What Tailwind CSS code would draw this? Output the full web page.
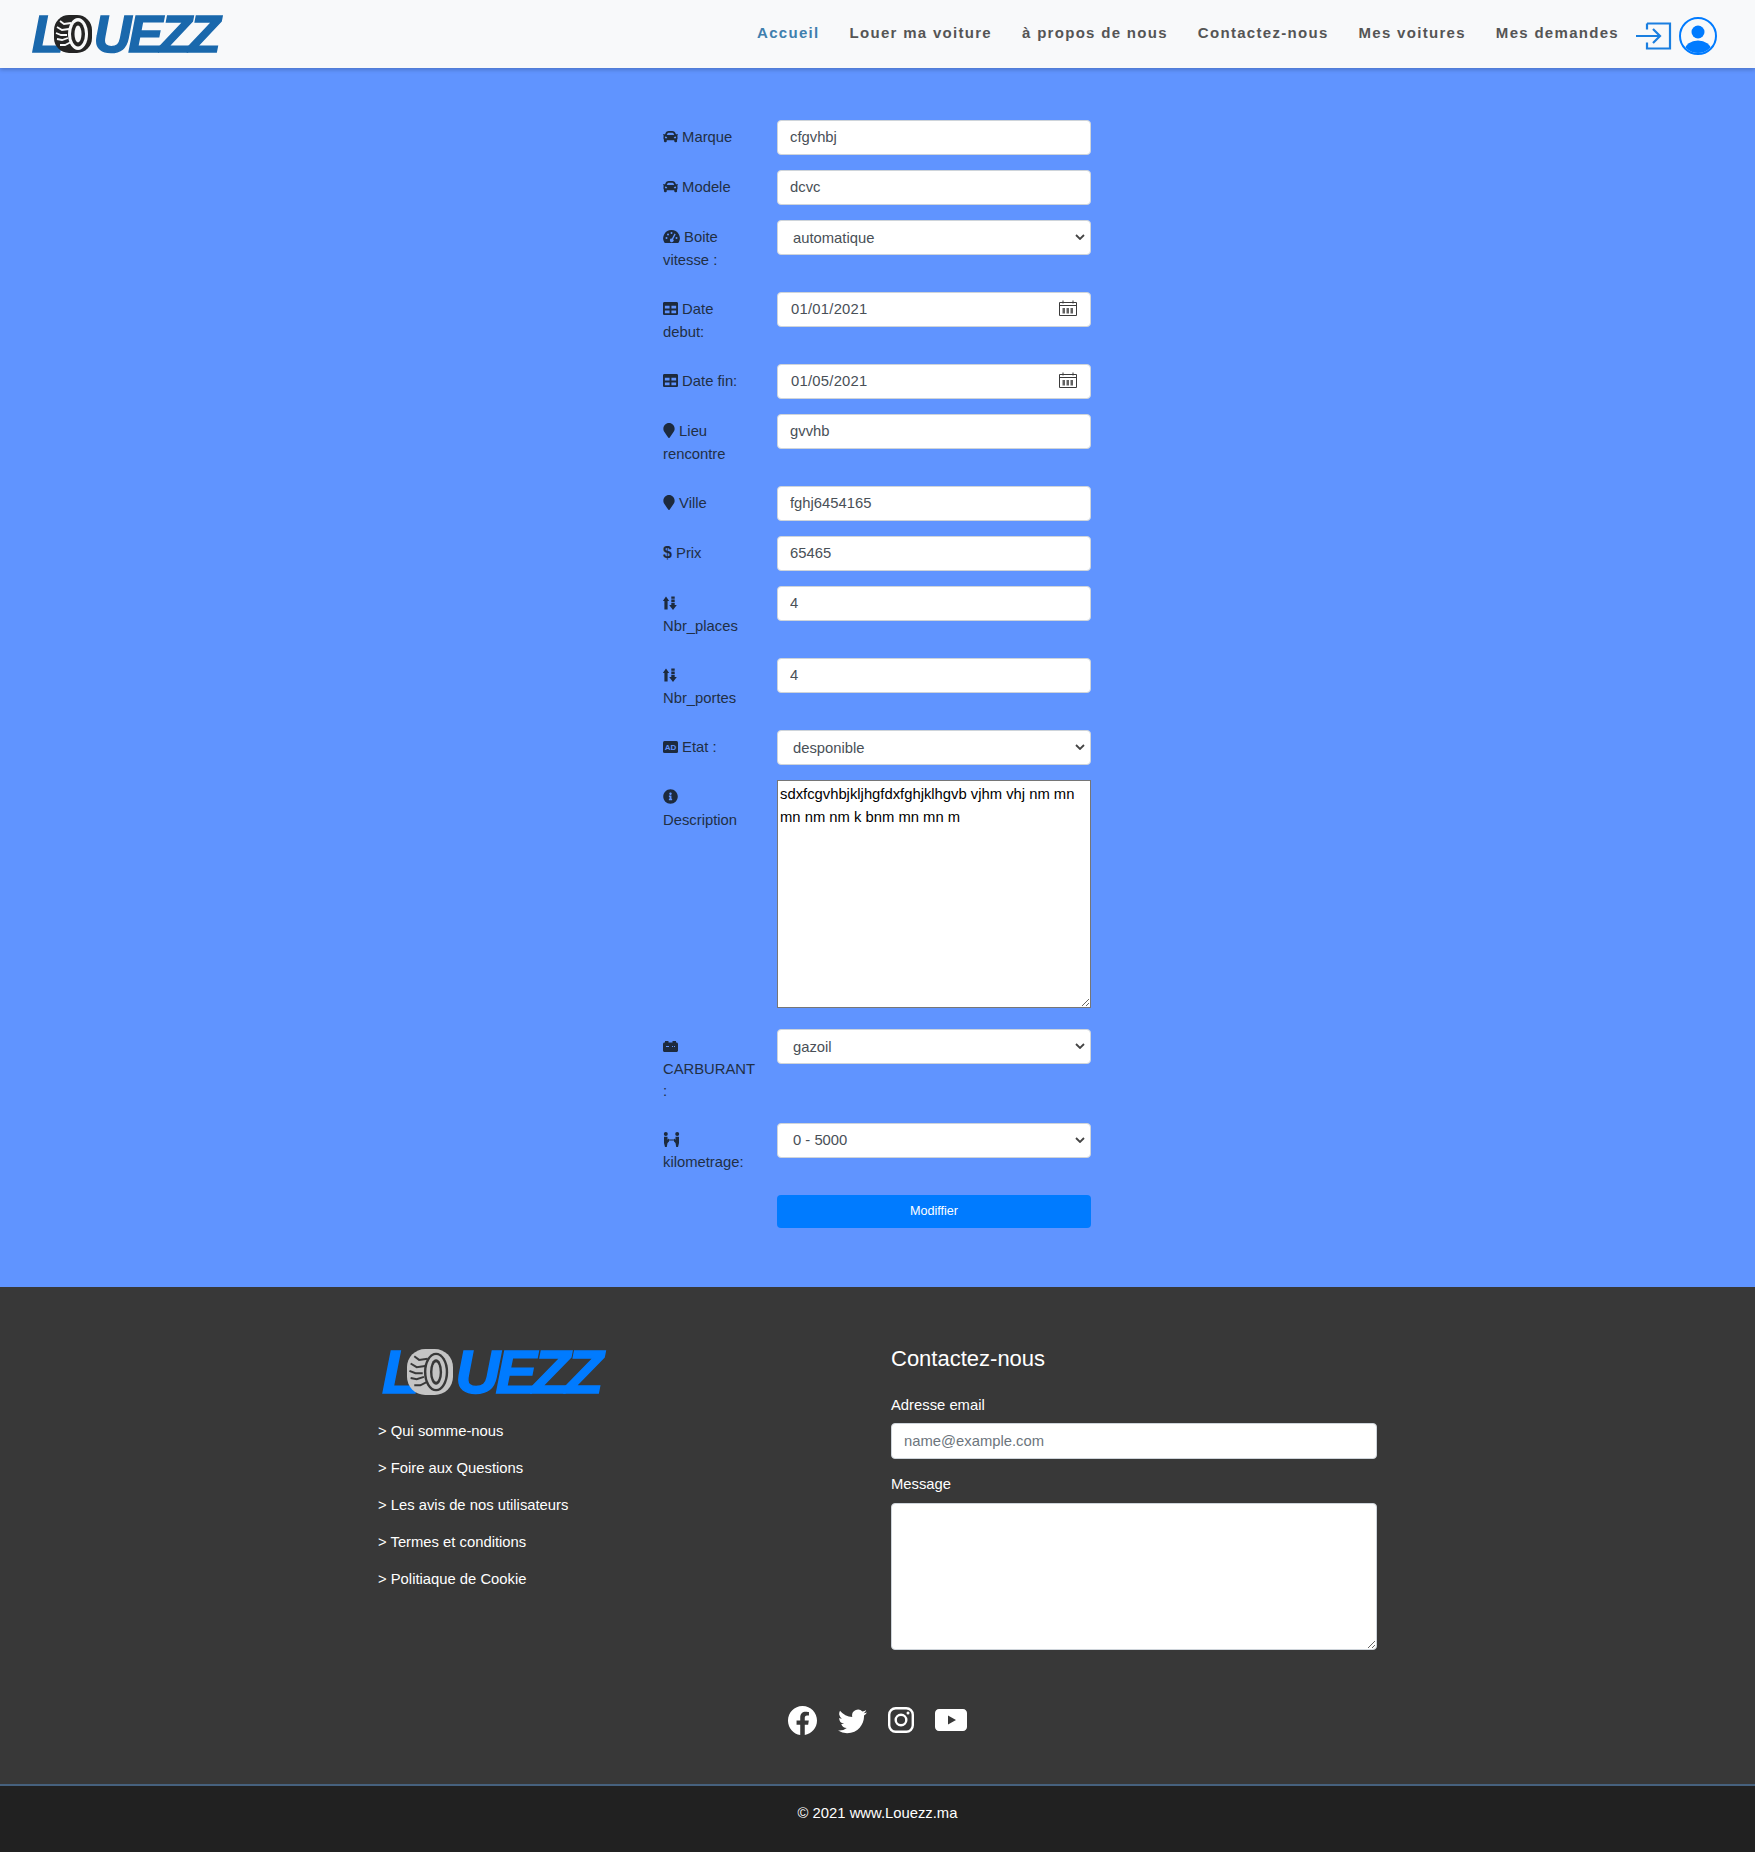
<!DOCTYPE html>
<html lang="fr">

<head>
  <meta charset="UTF-8">
  <meta name="viewport" content="width=device-width, initial-scale=1.0">
  <script src="https://cdn.jsdelivr.net/npm/@tailwindcss/browser@4"></script>
  <title>Louezz - Modifier voiture</title>
</head>

<body class="font-['Liberation_Sans',Arial,sans-serif] text-[14.8px] bg-[#6094ff]">

  <!-- icones reutilisees -->
  <svg class="hidden">
    <symbol id="car" viewBox="0 0 512 512"><path d="M499.99 176h-59.87l-16.64-41.6C406.38 91.63 365.57 64 319.5 64h-127c-46.06 0-86.88 27.63-103.99 70.4L71.87 176H12.01C4.2 176-1.53 183.34.37 190.91l6 24C7.7 220.25 12.5 224 18.01 224h20.07C24.65 235.73 16 252.78 16 272v48c0 16.12 6.16 30.67 16 41.93V416c0 17.67 14.33 32 32 32h32c17.67 0 32-14.33 32-32v-32h256v32c0 17.67 14.33 32 32 32h32c17.67 0 32-14.33 32-32v-54.07c9.84-11.25 16-25.8 16-41.93v-48c0-19.22-8.65-36.27-22.07-48H494c5.51 0 10.31-3.75 11.64-9.09l6-24c1.89-7.57-3.84-14.91-11.65-14.91zm-352.06-17.83c7.29-18.22 24.94-30.17 44.57-30.17h127c19.63 0 37.28 11.95 44.57 30.17L384 208H128l19.93-49.83zM96 319.8c-19.2 0-32-12.76-32-31.9S76.8 256 96 256s48 28.71 48 47.85-28.8 15.95-48 15.95zm320 0c-19.2 0-48 3.19-48-15.95S396.8 256 416 256s32 12.76 32 31.9-12.8 31.9-32 31.9z" fill="currentColor"/></symbol>
    <symbol id="table" viewBox="0 0 512 512"><path d="M464 32H48C21.49 32 0 53.49 0 80v352c0 26.51 21.49 48 48 48h416c26.51 0 48-21.49 48-48V80c0-26.51-21.49-48-48-48zM224 416H64v-96h160v96zm0-160H64v-96h160v96zm224 160H288v-96h160v96zm0-160H288v-96h160v96z" fill="currentColor"/></symbol>
    <symbol id="pin" viewBox="0 0 384 512"><path d="M172.268 501.67C26.97 291.031 0 268.413 0 192 0 85.961 85.961 0 192 0s192 85.961 192 192c0 76.413-26.97 99.031-172.268 309.67-9.535 13.774-29.93 13.773-39.464 0z" fill="currentColor"/></symbol>
    <symbol id="sort" viewBox="0 0 14 14"><path d="M3 .5 L6.200 5 H4.600 V13.500 H1.400 V5 H-.2 Z M8.300 .5 H11.700 V2.800 H8.300 Z M8.300 3.600 H11.700 V5.900 H8.300 Z M8.300 6.700 H11.700 V9 H13.800 L10 14 L6.200 9 H8.300 Z" fill="currentColor"/></symbol>
    <symbol id="calendar" viewBox="0 0 18 16"><path d="M.5 2.500h17v13H.5z M.5 5.500h17 M4 .5v3 M14 .5v3" fill="none" stroke="currentColor"/><path d="M3.500 8v5.500h2.500V8z M7.500 8v5.500h2.500V8z M11.500 8v5.500h2.500V8z" fill="currentColor" opacity=".8"/></symbol>
    <symbol id="chevron" viewBox="0 0 10 6"><path d="M1 1l4 4 4-4" fill="none" stroke="currentColor" stroke-width="1.800"/></symbol>
    <symbol id="tire-dark" viewBox="0 0 38 38">
      <rect x="0" y="0" width="38" height="38" rx="15" fill="#242424"/>
      <path d="M6 6l4 3 7-1M3 12l5 3 7-1M2 18l5 2 6 0M3 24l5 1 6-2M6 30l5 0 6-3" stroke="#f8f9fa" stroke-width="1.800" fill="none"/>
      <ellipse cx="24" cy="19" rx="10" ry="16" fill="#f8f9fa"/>
      <ellipse cx="24" cy="19" rx="7" ry="12.500" fill="#242424"/>
      <ellipse cx="24" cy="19" rx="3.500" ry="8.500" fill="#f8f9fa"/>
    </symbol>
    <symbol id="tire-light" viewBox="0 0 38 38">
      <rect x="0" y="0" width="38" height="38" rx="15" fill="#c4c4c4"/>
      <path d="M6 6l4 3 7-1M3 12l5 3 7-1M2 18l5 2 6 0M3 24l5 1 6-2M6 30l5 0 6-3" stroke="#383838" stroke-width="1.600" fill="none"/>
      <ellipse cx="24" cy="19" rx="10" ry="16" fill="#383838"/>
      <ellipse cx="24" cy="19" rx="8" ry="14" fill="#c4c4c4"/>
      <ellipse cx="24" cy="19" rx="5" ry="10.500" fill="#383838"/>
      <ellipse cx="24" cy="19" rx="3" ry="8" fill="#c4c4c4"/>
    </symbol>
  </svg>

  <header class="h-[68px] bg-[#f8f9fa] flex items-center justify-between pl-[32px] pr-[38px] shadow-[0_2px_4px_rgba(0,0,0,0.2)] relative">
    <div class="flex items-center text-[#1a68ac] font-bold italic text-[52px] leading-[38px] tracking-[-3px] [-webkit-text-stroke:1.5px_#1a68ac]">
      <span>L</span>
      <svg class="w-[38px] h-[38px] -ml-[7px] mr-[2px]"><use href="#tire-dark"/></svg>
      <span>UEZZ</span>
    </div>
    <nav class="flex items-center">
      <div class="flex items-center gap-[30px] text-[15px] font-bold tracking-[1.300px] text-[#555] -mt-[2px]">
        <a href="#" class="text-[#3f7fae]">Accueil</a>
        <a href="#">Louer ma voiture</a>
        <a href="#">à propos de nous</a>
        <a href="#">Contactez-nous</a>
        <a href="#">Mes voitures</a>
        <a href="#">Mes demandes</a>
      </div>
      <svg class="w-[36px] h-[28px] ml-[17px] mt-[3px] text-[#1a7fe0]" viewBox="0 0 36 28" fill="none" stroke="currentColor" stroke-width="2.200">
        <path d="M11 1.500h23v25H11v-6 M11 1.500v6"/>
        <path d="M0 14h24 M17 7l7 7-7 7"/>
      </svg>
      <svg class="w-[38px] h-[38px] ml-[7px] mt-[3px] text-[#007bff]" viewBox="0 0 38 38">
        <defs><clipPath id="ucirc"><circle cx="19" cy="19" r="17"/></clipPath></defs>
        <circle cx="19" cy="19" r="18" fill="none" stroke="currentColor" stroke-width="2"/>
        <g clip-path="url(#ucirc)" fill="currentColor">
          <circle cx="19" cy="15" r="6.500"/>
          <ellipse cx="19" cy="33" rx="13" ry="9.500"/>
        </g>
      </svg>
    </nav>
  </header>

  <main class="h-[1219px] pt-[52px] pl-[663px]">
    <form class="text-[#212f45] leading-[22.5px]">

      <div class="flex mb-[15px]">
        <label class="w-[114px] py-[6px]"><svg class="inline-block w-[15px] h-[15px] align-[-2px] text-[#1d2a3d]"><use href="#car"/></svg> Marque</label>
        <input value="cfgvhbj" class="w-[314px] h-[35px] px-[12px] pb-[1px] bg-white border border-[#ced4da] rounded-[4px] text-[#495057]">
      </div>

      <div class="flex mb-[15px]">
        <label class="w-[114px] py-[6px]"><svg class="inline-block w-[15px] h-[15px] align-[-2px] text-[#1d2a3d]"><use href="#car"/></svg> Modele</label>
        <input value="dcvc" class="w-[314px] h-[35px] px-[12px] pb-[1px] bg-white border border-[#ced4da] rounded-[4px] text-[#495057]">
      </div>

      <div class="flex items-start mb-[15px]">
        <label class="w-[114px] py-[6px]">
          <svg class="inline-block w-[17px] h-[15px] align-[-2px] text-[#1d2a3d]" viewBox="0 0 17 15"><path fill-rule="evenodd" d="M8.500 1a8.300 8.300 0 0 0-7.200 12.500c.2.300.5.500.9.500h12.600c.4 0 .7-.2.900-.5A8.300 8.300 0 0 0 8.500 1zM11.500 4.600l1.200.6-2.600 5a1.800 1.800 0 1 1-1.200-.6zM3.500 8a1 1 0 1 1 0 2 1 1 0 0 1 0-2zM5 4.500a1 1 0 1 1 0 2 1 1 0 0 1 0-2zM8.500 3a1 1 0 1 1 0 2 1 1 0 0 1 0-2zM13.500 8a1 1 0 1 1 0 2 1 1 0 0 1 0-2z" fill="currentColor"/></svg> Boite<br>vitesse :
        </label>
        <div class="relative">
          <select class="block appearance-none w-[314px] h-[35px] pl-[15px] pr-[24px] pt-[1px] bg-white border border-[#ced4da] rounded-[4px] text-[#495057]">
            <option>automatique</option>
          </select>
          <svg class="absolute right-[6px] top-[14px] w-[10px] h-[6px] text-[#444]"><use href="#chevron"/></svg>
        </div>
      </div>

      <div class="flex items-start mb-[15px]">
        <label class="w-[114px] py-[6px]"><svg class="inline-block w-[15px] h-[15px] align-[-2px] text-[#1d2a3d]"><use href="#table"/></svg> Date<br>debut:</label>
        <div class="relative">
          <input value="01/01/2021" class="w-[314px] h-[35px] pl-[13px] pr-[12px] pb-[1px] bg-white border border-[#ced4da] rounded-[4px] text-[#495057] tracking-[0.25px]">
          <svg class="absolute right-[14px] top-[8px] w-[18px] h-[16px] text-[#3a3a3a]"><use href="#calendar"/></svg>
        </div>
      </div>

      <div class="flex mb-[15px]">
        <label class="w-[114px] py-[6px]"><svg class="inline-block w-[15px] h-[15px] align-[-2px] text-[#1d2a3d]"><use href="#table"/></svg> Date fin:</label>
        <div class="relative">
          <input value="01/05/2021" class="w-[314px] h-[35px] pl-[13px] pr-[12px] pb-[1px] bg-white border border-[#ced4da] rounded-[4px] text-[#495057] tracking-[0.25px]">
          <svg class="absolute right-[14px] top-[8px] w-[18px] h-[16px] text-[#3a3a3a]"><use href="#calendar"/></svg>
        </div>
      </div>

      <div class="flex items-start mb-[15px]">
        <label class="w-[114px] py-[6px]"><svg class="inline-block w-[12px] h-[15px] align-[-2px] text-[#1d2a3d]"><use href="#pin"/></svg> Lieu<br>rencontre</label>
        <input value="gvvhb" class="w-[314px] h-[35px] px-[12px] pb-[1px] bg-white border border-[#ced4da] rounded-[4px] text-[#495057]">
      </div>

      <div class="flex mb-[15px]">
        <label class="w-[114px] py-[6px]"><svg class="inline-block w-[12px] h-[15px] align-[-2px] text-[#1d2a3d]"><use href="#pin"/></svg> Ville</label>
        <input value="fghj6454165" class="w-[314px] h-[35px] px-[12px] pb-[1px] bg-white border border-[#ced4da] rounded-[4px] text-[#495057]">
      </div>

      <div class="flex mb-[15px]">
        <label class="w-[114px] py-[6px]"><span class="font-bold text-[16px] text-[#1d2a3d]">$</span> Prix</label>
        <input value="65465" class="w-[314px] h-[35px] px-[12px] pb-[1px] bg-white border border-[#ced4da] rounded-[4px] text-[#495057]">
      </div>

      <div class="flex items-start mb-[15px]">
        <label class="w-[114px] py-[6px]"><svg class="inline-block w-[14px] h-[14px] align-[-2px] text-[#1d2a3d]"><use href="#sort"/></svg><br>Nbr_places</label>
        <input value="4" class="w-[314px] h-[35px] px-[12px] pb-[1px] bg-white border border-[#ced4da] rounded-[4px] text-[#495057]">
      </div>

      <div class="flex items-start mb-[15px]">
        <label class="w-[114px] py-[6px]"><svg class="inline-block w-[14px] h-[14px] align-[-2px] text-[#1d2a3d]"><use href="#sort"/></svg><br>Nbr_portes</label>
        <input value="4" class="w-[314px] h-[35px] px-[12px] pb-[1px] bg-white border border-[#ced4da] rounded-[4px] text-[#495057]">
      </div>

      <div class="flex mb-[15px]">
        <label class="w-[114px] py-[6px]">
          <svg class="inline-block w-[15px] h-[12px] align-[-1px] text-[#1d2a3d]" viewBox="0 0 15 12"><rect width="15" height="12" rx="1.500" fill="currentColor"/><text x="7.500" y="9.200" text-anchor="middle" font-size="8" font-weight="700" fill="#6094ff" font-family="Liberation Sans">AD</text></svg> Etat :
        </label>
        <div class="relative">
          <select class="block appearance-none w-[314px] h-[35px] pl-[15px] pr-[24px] pt-[1px] bg-white border border-[#ced4da] rounded-[4px] text-[#495057]">
            <option>desponible</option>
          </select>
          <svg class="absolute right-[6px] top-[14px] w-[10px] h-[6px] text-[#444]"><use href="#chevron"/></svg>
        </div>
      </div>

      <div class="flex items-start mb-[21px]">
        <label class="w-[114px] py-[6px]"><svg class="inline-block w-[15px] h-[15px] align-[-2px] text-[#1d2a3d]" viewBox="0 0 512 512"><path d="M256 8C119.043 8 8 119.083 8 256c0 136.997 111.043 248 248 248s248-111.003 248-248C504 119.083 392.957 8 256 8zm0 110c23.196 0 42 18.804 42 42s-18.804 42-42 42-42-18.804-42-42 18.804-42 42-42zm56 254c0 6.627-5.373 12-12 12h-88c-6.627 0-12-5.373-12-12v-24c0-6.627 5.373-12 12-12h12v-64h-12c-6.627 0-12-5.373-12-12v-24c0-6.627 5.373-12 12-12h64c6.627 0 12 5.373 12 12v100h12c6.627 0 12 5.373 12 12v24z" fill="currentColor"/></svg><br>Description</label>
        <textarea class="w-[314px] h-[228px] p-[2px] bg-white border border-[#767676] text-black">sdxfcgvhbjkljhgfdxfghjklhgvb vjhm vhj nm mn mn nm nm k bnm mn mn m</textarea>
      </div>

      <div class="flex items-start mb-[14px]">
        <label class="w-[114px] py-[6px]"><svg class="inline-block w-[15px] h-[12px] align-[-1px] text-[#1d2a3d]" viewBox="0 0 15 12"><path fill-rule="evenodd" d="M2 1h3.500v1.500h4V1H13v1.500h.5c.8 0 1.500.7 1.500 1.500v6.500c0 .8-.7 1.500-1.500 1.500h-12C.7 12 0 11.300 0 10.500V4c0-.8.7-1.500 1.500-1.500H2zM3 6v1h3V6zM9 6v1h1V6zM11 6v1h1V6z" fill="currentColor"/></svg><br>CARBURANT<br>:</label>
        <div class="relative">
          <select class="block appearance-none w-[314px] h-[35px] pl-[15px] pr-[24px] pt-[1px] bg-white border border-[#ced4da] rounded-[4px] text-[#495057]">
            <option>gazoil</option>
          </select>
          <svg class="absolute right-[6px] top-[14px] w-[10px] h-[6px] text-[#444]"><use href="#chevron"/></svg>
        </div>
      </div>

      <div class="flex items-start mb-[15px]">
        <label class="w-[114px] py-[6px]"><svg class="inline-block w-[17px] h-[15px] align-[-2px] text-[#1d2a3d]" viewBox="0 0 17 15"><circle cx="2.800" cy="2" r="2" fill="currentColor"/><circle cx="14.200" cy="2" r="2" fill="currentColor"/><path d="M1 4.800h3.500v3l1.500-1.200v1H11v-1l1.500 1.200v-3H16V11l-1 4h-1.800l-.7-4-1.500-1.500v-1H6v1L4.500 11l-.7 4H2l-1-4z" fill="currentColor"/></svg><br>kilometrage:</label>
        <div class="relative">
          <select class="block appearance-none w-[314px] h-[35px] pl-[15px] pr-[24px] pt-[1px] bg-white border border-[#ced4da] rounded-[4px] text-[#495057]">
            <option>0 - 5000</option>
          </select>
          <svg class="absolute right-[6px] top-[14px] w-[10px] h-[6px] text-[#444]"><use href="#chevron"/></svg>
        </div>
      </div>

      <div class="flex">
        <div class="w-[114px]"></div>
        <button type="button" class="w-[314px] h-[33px] bg-[#007bff] rounded-[4px] text-white text-[12.6px]">Modiffier</button>
      </div>
    </form>
  </main>

  <footer class="bg-[#383838] h-[499px] pt-[62px] border-b-2 border-[#46617e] text-white">
    <div class="w-[999px] mx-auto flex">
      <div class="w-[513px]">
        <div class="flex items-center pl-[4px] text-[#007bff] font-bold italic text-[62px] leading-[46px] tracking-[-4.600px] [-webkit-text-stroke:1.5px_#007bff]">
          <span>L</span>
          <svg class="w-[46px] h-[46px] -ml-[8px] mr-[2px]"><use href="#tire-light"/></svg>
          <span>UEZZ</span>
        </div>
        <ul class="mt-[18px] leading-[37px]">
          <li><a href="#">&gt; Qui somme-nous</a></li>
          <li><a href="#">&gt; Foire aux Questions</a></li>
          <li><a href="#">&gt; Les avis de nos utilisateurs</a></li>
          <li><a href="#">&gt; Termes et conditions</a></li>
          <li><a href="#">&gt; Politiaque de Cookie</a></li>
        </ul>
      </div>
      <div class="w-[486px] -mt-[3px]">
        <h3 class="text-[22px] leading-[26px]">Contactez-nous</h3>
        <label class="block mt-[22px] leading-[22px]">Adresse email</label>
        <input placeholder="name@example.com" class="block w-[486px] h-[36px] mt-[7px] px-[12px] bg-white border border-[#ced4da] rounded-[4px] text-[#495057] placeholder:text-[#6c757d]">
        <label class="block mt-[14px] leading-[22px]">Message</label>
        <textarea class="block w-[486px] h-[147px] mt-[8px] bg-white border border-[#ced4da] rounded-[4px]"></textarea>
      </div>
    </div>
    <div class="flex justify-center items-center gap-[21px] mt-[56px] pr-[1px] h-[28px]">
      <svg class="w-[29px] h-[29px]" viewBox="0 0 16 16" fill="white"><path d="M16 8.049c0-4.446-3.582-8.05-8-8.05C3.58 0-.002 3.603-.002 8.05c0 4.017 2.926 7.347 6.75 7.951v-5.625h-2.03V8.05H6.75V6.275c0-2.017 1.195-3.131 3.022-3.131.876 0 1.791.157 1.791.157v1.980h-1.009c-.993 0-1.303.621-1.303 1.258v1.510h2.218l-.354 2.326H9.25V16c3.824-.604 6.75-3.934 6.750-7.951z"/></svg>
      <svg class="w-[29px] h-[29px]" viewBox="0 0 16 16" fill="white"><path d="M5.026 15c6.038 0 9.341-5.003 9.341-9.334 0-.14 0-.282-.006-.422A6.685 6.685 0 0 0 16 3.542a6.658 6.658 0 0 1-1.889.518 3.301 3.301 0 0 0 1.447-1.817 6.533 6.533 0 0 1-2.087.793A3.286 3.286 0 0 0 7.875 6.030a9.325 9.325 0 0 1-6.767-3.429 3.289 3.289 0 0 0 1.018 4.382A3.323 3.323 0 0 1 .64 6.575v.045a3.288 3.288 0 0 0 2.632 3.218 3.203 3.203 0 0 1-.865.115 3.230 3.230 0 0 1-.614-.057 3.283 3.283 0 0 0 3.067 2.277A6.588 6.588 0 0 1 .78 13.580a6.320 6.320 0 0 1-.78-.045A9.344 9.344 0 0 0 5.026 15z"/></svg>
      <svg class="w-[26px] h-[26px]" viewBox="0 0 26 26" fill="none" stroke="white" stroke-width="2.400"><rect x="1.200" y="1.200" width="23.600" height="23.600" rx="6.500"/><circle cx="13" cy="13" r="5.300"/><circle cx="20" cy="6" r="1.500" fill="white" stroke="none"/></svg>
      <svg class="w-[32px] h-[22px]" viewBox="0 0 32 22"><path fill-rule="evenodd" d="M4 0h24c2.200 0 4 1.800 4 4v14c0 2.200-1.800 4-4 4H4c-2.200 0-4-1.800-4-4V4c0-2.200 1.800-4 4-4zm9 6.500v9l8-4.500z" fill="white"/></svg>
    </div>
  </footer>

  <div class="bg-[#212121] h-[66px] pt-[16px] text-center text-white leading-[22px]">© 2021 www.Louezz.ma</div>

</body>

</html>
